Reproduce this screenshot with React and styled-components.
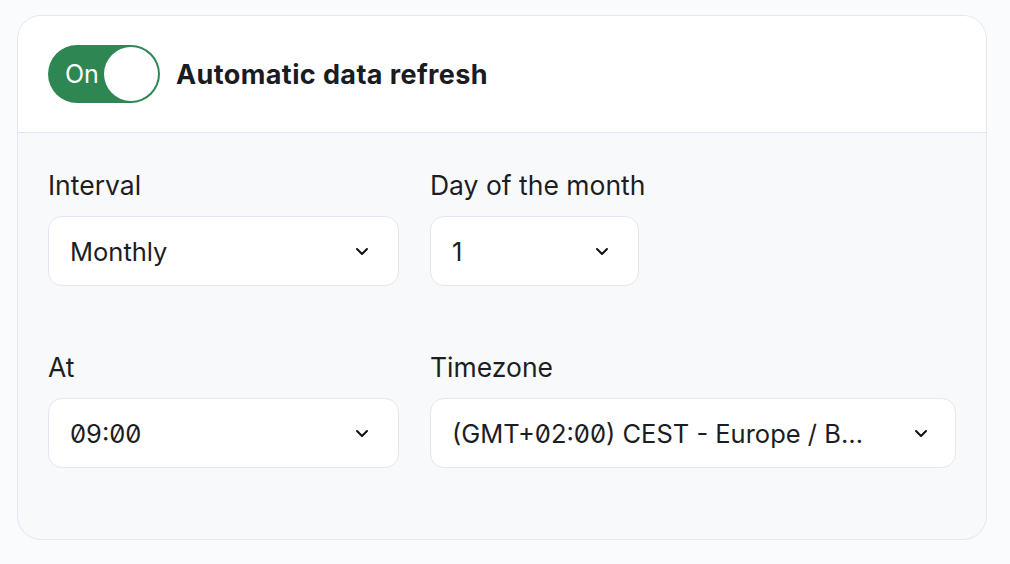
import React from "react";
import styled, { createGlobalStyle } from "styled-components";

const Global = createGlobalStyle`
  html, body { margin: 0; padding: 0; background: #fafbfd; }
  body { font-family: Inter, "Noto Sans", sans-serif; color: #1c1e23; }
  * { box-sizing: border-box; }
`;

const Page = styled.div`
  padding: 15px 23px 24px 17px;
  width: 1010px;
  height: 564px;
`;

const Card = styled.section`
  width: 970px;
  height: 525px;
  border: 1px solid #e4e6f2;
  border-radius: 24px;
  overflow: hidden;
  background: #f8f9fb;
  display: flex;
  flex-direction: column;
`;

const Header = styled.header`
  height: 117px;
  flex: none;
  background: #ffffff;
  border-bottom: 1px solid #e1e5f3;
  display: flex;
  align-items: center;
  gap: 16px;
  padding: 0 30px;
`;

const Toggle = styled.button`
  width: 112px;
  height: 58px;
  border-radius: 29px;
  border: none;
  background: #2e8753;
  position: relative;
  padding: 0 0 0 17px;
  display: flex;
  align-items: center;
  cursor: pointer;
  font-family: Inter, sans-serif;
  font-size: 25px;
  color: #ffffff;
`;

const Knob = styled.span`
  position: absolute;
  right: 2px;
  top: 2px;
  width: 54px;
  height: 54px;
  border-radius: 50%;
  background: #ffffff;
`;

const Title = styled.h2`
  margin: 0;
  font-size: 27px;
  font-weight: 700;
  letter-spacing: 0.4px;
  color: #1a1c22;
`;

const Body = styled.div`
  padding: 36px 30px 0 30px;
  display: grid;
  grid-template-columns: 351px 526px;
  column-gap: 31px;
  row-gap: 65px;
  align-content: start;
`;

const Field = styled.div`
  display: flex;
  flex-direction: column;
  gap: 15px;
`;

const Label = styled.label`
  font-size: 26.5px;
  line-height: 32px;
  color: #1c1e23;
`;

const Select = styled.div`
  width: ${(p) => p.$width || "100%"};
  height: 70px;
  background: #ffffff;
  border: 1px solid #e4e6f2;
  border-radius: 14px;
  display: flex;
  align-items: center;
  padding: 0 ${(p) => p.$pr || 28}px 0 21px;
  gap: ${(p) => p.$gap || 12}px;
`;

const Value = styled.span`
  flex: 1;
  min-width: 0;
  font-size: 25.5px;
  color: #1c1e23;
  white-space: nowrap;
  overflow: hidden;
  text-overflow: ellipsis;
  font-feature-settings: "zero" 1;
`;

const Chevron = () => (
  <svg width="16" height="16" viewBox="0 0 16 16" fill="none">
    <path d="M3 6l5 5 5-5" stroke="#111" strokeWidth="2" strokeLinecap="round" strokeLinejoin="round" />
  </svg>
);

const Dropdown = ({ value, width, pr, gap }) => (
  <Select $width={width} $pr={pr} $gap={gap}>
    <Value>{value}</Value>
    <Chevron />
  </Select>
);

export default function App() {
  return (
    <>
      <Global />
      <Page>
        <Card>
          <Header>
            <Toggle>
              On
              <Knob />
            </Toggle>
            <Title>Automatic data refresh</Title>
          </Header>
          <Body>
            <Field>
              <Label>Interval</Label>
              <Dropdown value="Monthly" />
            </Field>
            <Field>
              <Label>Day of the month</Label>
              <Dropdown value="1" width="209px" />
            </Field>
            <Field>
              <Label>At</Label>
              <Dropdown value="09:00" />
            </Field>
            <Field>
              <Label>Timezone</Label>
              <Dropdown value="(GMT+02:00) CEST - Europe / Berlin" pr={26} gap={46} />
            </Field>
          </Body>
        </Card>
      </Page>
    </>
  );
}
